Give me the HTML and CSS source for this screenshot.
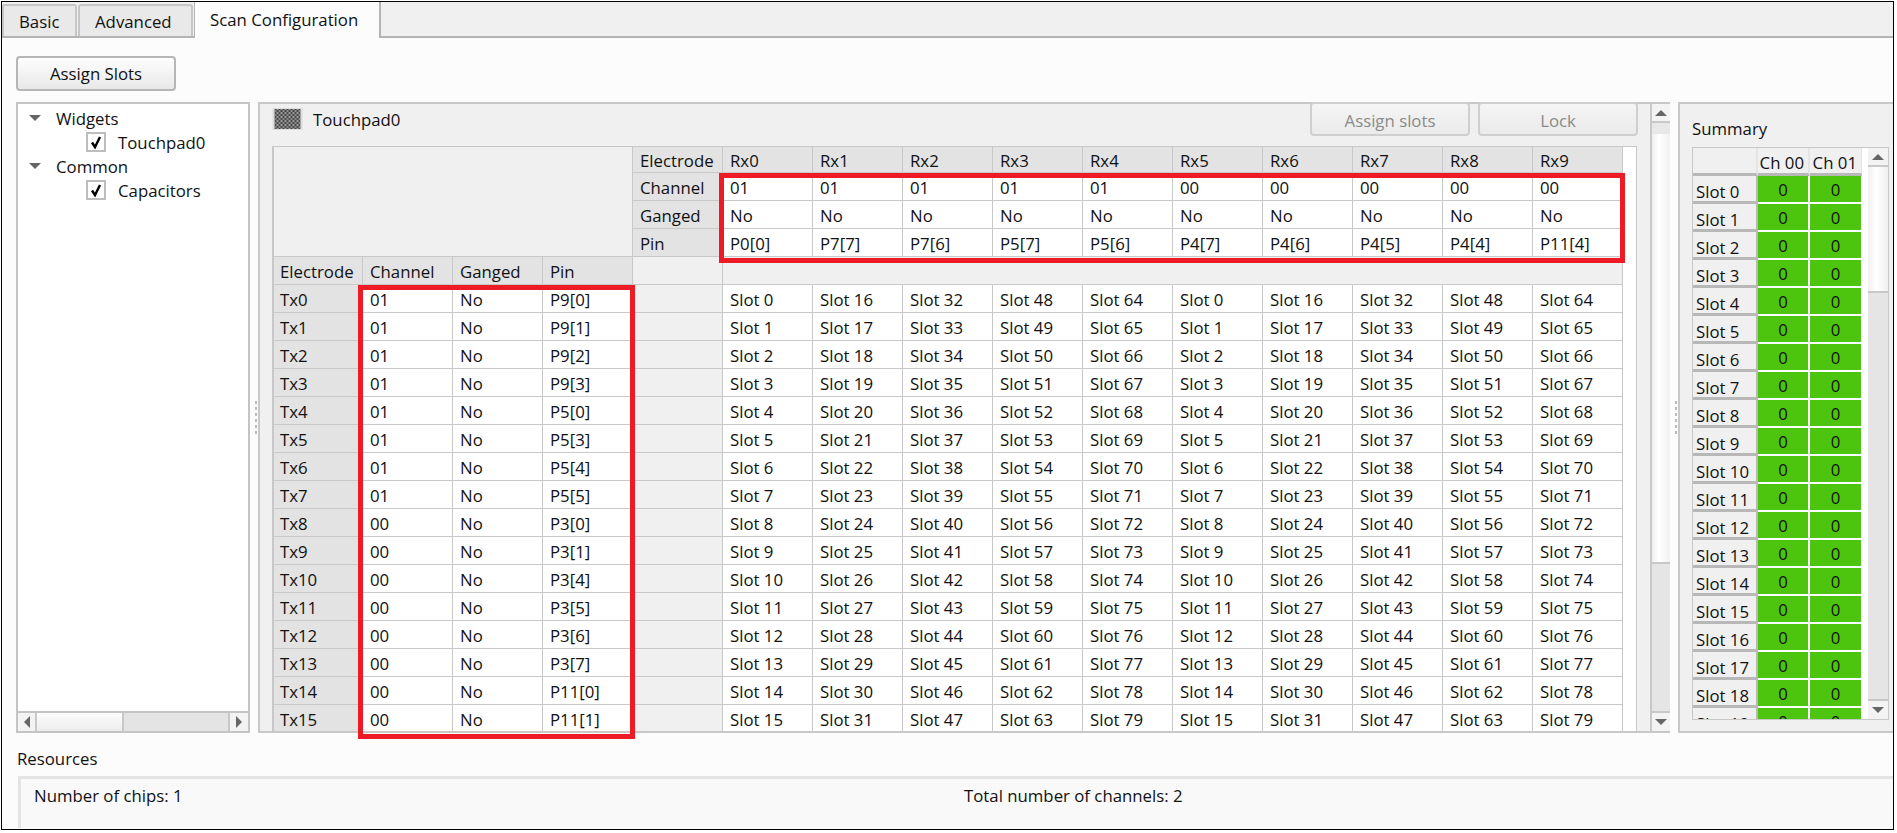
FILE: index.html
```html
<!DOCTYPE html>
<html lang="en">
<head>
<meta charset="utf-8">
<title>Scan Configuration</title>
<link rel="stylesheet" href="styles.css">
</head>
<body>
<div class="app">
  <div class="tabbar">
    <div class="tab tab-basic">Basic</div>
    <div class="tab tab-adv">Advanced</div>
    <div class="tab tab-active">Scan Configuration</div>
  </div>
  <button class="btn btn-assign">Assign Slots</button>
  <div class="workspace">
    <aside class="tree">
      <div class="tree-body">
        <div class="tree-row"><span class="tri-down tree-tri"></span><span class="tree-group">Widgets</span></div>
        <div class="tree-row tree-child"><svg class="check" viewBox="0 0 20 20"><rect x="1" y="1" width="18" height="18" fill="#fff" stroke="#bdbdbd" stroke-width="2"/><path d="M6 10.5l3 4.5 5-10" fill="none" stroke="#000" stroke-width="2.4"/></svg><span>Touchpad0</span></div>
        <div class="tree-row"><span class="tri-down tree-tri"></span><span class="tree-group">Common</span></div>
        <div class="tree-row tree-child"><svg class="check" viewBox="0 0 20 20"><rect x="1" y="1" width="18" height="18" fill="#fff" stroke="#bdbdbd" stroke-width="2"/><path d="M6 10.5l3 4.5 5-10" fill="none" stroke="#000" stroke-width="2.4"/></svg><span>Capacitors</span></div>
      </div>
      <div class="hscroll">
        <div class="hs-btn"><span class="tri-left"></span></div>
        <div class="hs-thumb"></div>
        <div class="hs-track"></div>
        <div class="hs-btn hs-btn-r"><span class="tri-right"></span></div>
      </div>
    </aside>
    <div class="splitter"><i></i><i></i><i></i><i></i><i></i><i></i></div>
    <section class="editor">
      <div class="editor-main">
        <div class="editor-head">
          <svg class="pad-icon" viewBox="0 0 30 22"><defs><pattern id="chk" width="4" height="4" patternUnits="userSpaceOnUse"><rect width="4" height="4" fill="#4a4a4a"/><rect width="2" height="2" fill="#9a9a9a"/><rect x="2" y="2" width="2" height="2" fill="#8a8a8a"/></pattern></defs><rect width="30" height="22" fill="#dcdcdc"/><rect x="2" y="1" width="26" height="20" fill="url(#chk)"/></svg>
          <span class="pad-name">Touchpad0</span>
          <button class="btn btn-off">Assign slots</button>
          <button class="btn btn-off">Lock</button>
        </div>
        <div class="grid-view">
          <table class="grid">
            <colgroup><col class="col-a"><col class="col-b"><col class="col-b"><col class="col-b"><col class="col-b"><col class="col-b"><col class="col-b"><col class="col-b"><col class="col-b"><col class="col-b"><col class="col-b"><col class="col-b"><col class="col-b"><col class="col-b"><col class="col-b"></colgroup>
            <tr class="first"><td class="blank" colspan="4" rowspan="4"></td><th>Electrode</th><th>Rx0</th><th>Rx1</th><th>Rx2</th><th>Rx3</th><th>Rx4</th><th>Rx5</th><th>Rx6</th><th>Rx7</th><th>Rx8</th><th>Rx9</th></tr>
            <tr><th>Channel</th><td>01</td><td>01</td><td>01</td><td>01</td><td>01</td><td>00</td><td>00</td><td>00</td><td>00</td><td>00</td></tr>
            <tr><th>Ganged</th><td>No</td><td>No</td><td>No</td><td>No</td><td>No</td><td>No</td><td>No</td><td>No</td><td>No</td><td>No</td></tr>
            <tr><th>Pin</th><td>P0[0]</td><td>P7[7]</td><td>P7[6]</td><td>P5[7]</td><td>P5[6]</td><td>P4[7]</td><td>P4[6]</td><td>P4[5]</td><td>P4[4]</td><td>P11[4]</td></tr>
            <tr><th>Electrode</th><th>Channel</th><th>Ganged</th><th>Pin</th><td class="blank"></td><td class="blank" colspan="10"></td></tr>
            <tr><th>Tx0</th><td>01</td><td>No</td><td>P9[0]</td><td class="blank"></td><td>Slot 0</td><td>Slot 16</td><td>Slot 32</td><td>Slot 48</td><td>Slot 64</td><td>Slot 0</td><td>Slot 16</td><td>Slot 32</td><td>Slot 48</td><td>Slot 64</td></tr>
            <tr><th>Tx1</th><td>01</td><td>No</td><td>P9[1]</td><td class="blank"></td><td>Slot 1</td><td>Slot 17</td><td>Slot 33</td><td>Slot 49</td><td>Slot 65</td><td>Slot 1</td><td>Slot 17</td><td>Slot 33</td><td>Slot 49</td><td>Slot 65</td></tr>
            <tr><th>Tx2</th><td>01</td><td>No</td><td>P9[2]</td><td class="blank"></td><td>Slot 2</td><td>Slot 18</td><td>Slot 34</td><td>Slot 50</td><td>Slot 66</td><td>Slot 2</td><td>Slot 18</td><td>Slot 34</td><td>Slot 50</td><td>Slot 66</td></tr>
            <tr><th>Tx3</th><td>01</td><td>No</td><td>P9[3]</td><td class="blank"></td><td>Slot 3</td><td>Slot 19</td><td>Slot 35</td><td>Slot 51</td><td>Slot 67</td><td>Slot 3</td><td>Slot 19</td><td>Slot 35</td><td>Slot 51</td><td>Slot 67</td></tr>
            <tr><th>Tx4</th><td>01</td><td>No</td><td>P5[0]</td><td class="blank"></td><td>Slot 4</td><td>Slot 20</td><td>Slot 36</td><td>Slot 52</td><td>Slot 68</td><td>Slot 4</td><td>Slot 20</td><td>Slot 36</td><td>Slot 52</td><td>Slot 68</td></tr>
            <tr><th>Tx5</th><td>01</td><td>No</td><td>P5[3]</td><td class="blank"></td><td>Slot 5</td><td>Slot 21</td><td>Slot 37</td><td>Slot 53</td><td>Slot 69</td><td>Slot 5</td><td>Slot 21</td><td>Slot 37</td><td>Slot 53</td><td>Slot 69</td></tr>
            <tr><th>Tx6</th><td>01</td><td>No</td><td>P5[4]</td><td class="blank"></td><td>Slot 6</td><td>Slot 22</td><td>Slot 38</td><td>Slot 54</td><td>Slot 70</td><td>Slot 6</td><td>Slot 22</td><td>Slot 38</td><td>Slot 54</td><td>Slot 70</td></tr>
            <tr><th>Tx7</th><td>01</td><td>No</td><td>P5[5]</td><td class="blank"></td><td>Slot 7</td><td>Slot 23</td><td>Slot 39</td><td>Slot 55</td><td>Slot 71</td><td>Slot 7</td><td>Slot 23</td><td>Slot 39</td><td>Slot 55</td><td>Slot 71</td></tr>
            <tr><th>Tx8</th><td>00</td><td>No</td><td>P3[0]</td><td class="blank"></td><td>Slot 8</td><td>Slot 24</td><td>Slot 40</td><td>Slot 56</td><td>Slot 72</td><td>Slot 8</td><td>Slot 24</td><td>Slot 40</td><td>Slot 56</td><td>Slot 72</td></tr>
            <tr><th>Tx9</th><td>00</td><td>No</td><td>P3[1]</td><td class="blank"></td><td>Slot 9</td><td>Slot 25</td><td>Slot 41</td><td>Slot 57</td><td>Slot 73</td><td>Slot 9</td><td>Slot 25</td><td>Slot 41</td><td>Slot 57</td><td>Slot 73</td></tr>
            <tr><th>Tx10</th><td>00</td><td>No</td><td>P3[4]</td><td class="blank"></td><td>Slot 10</td><td>Slot 26</td><td>Slot 42</td><td>Slot 58</td><td>Slot 74</td><td>Slot 10</td><td>Slot 26</td><td>Slot 42</td><td>Slot 58</td><td>Slot 74</td></tr>
            <tr><th>Tx11</th><td>00</td><td>No</td><td>P3[5]</td><td class="blank"></td><td>Slot 11</td><td>Slot 27</td><td>Slot 43</td><td>Slot 59</td><td>Slot 75</td><td>Slot 11</td><td>Slot 27</td><td>Slot 43</td><td>Slot 59</td><td>Slot 75</td></tr>
            <tr><th>Tx12</th><td>00</td><td>No</td><td>P3[6]</td><td class="blank"></td><td>Slot 12</td><td>Slot 28</td><td>Slot 44</td><td>Slot 60</td><td>Slot 76</td><td>Slot 12</td><td>Slot 28</td><td>Slot 44</td><td>Slot 60</td><td>Slot 76</td></tr>
            <tr><th>Tx13</th><td>00</td><td>No</td><td>P3[7]</td><td class="blank"></td><td>Slot 13</td><td>Slot 29</td><td>Slot 45</td><td>Slot 61</td><td>Slot 77</td><td>Slot 13</td><td>Slot 29</td><td>Slot 45</td><td>Slot 61</td><td>Slot 77</td></tr>
            <tr><th>Tx14</th><td>00</td><td>No</td><td>P11[0]</td><td class="blank"></td><td>Slot 14</td><td>Slot 30</td><td>Slot 46</td><td>Slot 62</td><td>Slot 78</td><td>Slot 14</td><td>Slot 30</td><td>Slot 46</td><td>Slot 62</td><td>Slot 78</td></tr>
            <tr><th>Tx15</th><td>00</td><td>No</td><td>P11[1]</td><td class="blank"></td><td>Slot 15</td><td>Slot 31</td><td>Slot 47</td><td>Slot 63</td><td>Slot 79</td><td>Slot 15</td><td>Slot 31</td><td>Slot 47</td><td>Slot 63</td><td>Slot 79</td></tr>
          </table>
        </div>
      </div>
      <div class="vscroll">
        <div class="vs-btn"><span class="tri-up"></span></div>
        <div class="vs-gap"></div>
        <div class="vs-thumb vs-thumb-main"></div>
        <div class="vs-track"></div>
        <div class="vs-btn vs-btn-d"><span class="tri-down"></span></div>
      </div>
    </section>
    <div class="splitter"><i></i><i></i><i></i><i></i><i></i><i></i></div>
    <section class="summary">
      <div class="summary-title">Summary</div>
      <div class="summary-view">
        <div class="summary-clip">
          <table class="sum">
            <colgroup><col class="sum-a"><col class="sum-b"><col class="sum-c"></colgroup>
            <tr class="sum-head"><th></th><th>Ch 00</th><th>Ch 01</th></tr>
            <tr><th>Slot 0</th><td>0</td><td>0</td></tr>
            <tr><th>Slot 1</th><td>0</td><td>0</td></tr>
            <tr><th>Slot 2</th><td>0</td><td>0</td></tr>
            <tr><th>Slot 3</th><td>0</td><td>0</td></tr>
            <tr><th>Slot 4</th><td>0</td><td>0</td></tr>
            <tr><th>Slot 5</th><td>0</td><td>0</td></tr>
            <tr><th>Slot 6</th><td>0</td><td>0</td></tr>
            <tr><th>Slot 7</th><td>0</td><td>0</td></tr>
            <tr><th>Slot 8</th><td>0</td><td>0</td></tr>
            <tr><th>Slot 9</th><td>0</td><td>0</td></tr>
            <tr><th>Slot 10</th><td>0</td><td>0</td></tr>
            <tr><th>Slot 11</th><td>0</td><td>0</td></tr>
            <tr><th>Slot 12</th><td>0</td><td>0</td></tr>
            <tr><th>Slot 13</th><td>0</td><td>0</td></tr>
            <tr><th>Slot 14</th><td>0</td><td>0</td></tr>
            <tr><th>Slot 15</th><td>0</td><td>0</td></tr>
            <tr><th>Slot 16</th><td>0</td><td>0</td></tr>
            <tr><th>Slot 17</th><td>0</td><td>0</td></tr>
            <tr><th>Slot 18</th><td>0</td><td>0</td></tr>
            <tr><th>Slot 19</th><td>0</td><td>0</td></tr>
          </table>
        </div>
        <div class="vscroll vscroll-sum">
          <div class="vs-btn"><span class="tri-up"></span></div>
          <div class="vs-thumb vs-thumb-sum"></div>
          <div class="vs-track"></div>
          <div class="vs-btn vs-btn-d"><span class="tri-down"></span></div>
        </div>
      </div>
    </section>
  </div>
  <div class="res-title">Resources</div>
  <div class="res-box">
    <span>Number of chips: 1</span>
    <span>Total number of channels: 2</span>
  </div>
  <div class="mark mark-top"></div>
  <div class="mark mark-left"></div>
</div>
</body>
</html>
```

FILE: styles.css
```css
* { box-sizing: border-box; }
html, body { margin: 0; padding: 0; background: #fff; }
body {
  font-family: "Open Sans", "Noto Sans", sans-serif;
  font-size: 16.8px;
  color: #111;
  overflow: hidden;
}
.app {
  position: relative;
  width: 1893px;
  height: 829px;
  margin: 1px 0 0 1px;
  border: 1px solid #000;
  background: #fcfcfc;
  overflow: hidden;
}
.tabbar {
  display: flex;
  align-items: flex-end;
  height: 36px;
  background: #f0f0f0;
  border-bottom: 2px solid #b4b4b4;
}
.tab {
  display: flex;
  align-items: center;
  height: 32px;
  padding-left: 15px;
  background: #e9e9e9;
  border: 2px solid #c6c6c6;
  border-bottom: 0;
  border-radius: 3px 3px 0 0;
}
.tab-basic { width: 75px; margin-right: 1px; }
.tab-adv { width: 115px; margin-right: 1px; }
.tab-active {
  width: 187px;
  height: 38px;
  margin-bottom: -2px;
  padding: 0 0 0 15px;
  background: #fcfcfc;
  border-color: #b4b4b4;
  border-top: 0;
  border-left-width: 1px;
}
.btn {
  font: inherit;
  color: inherit;
  padding: 0;
  border: 2px solid #b6b6b6;
  border-radius: 4px;
  background: linear-gradient(#fdfdfd, #e9e9e9);
}
.btn-assign {
  display: block;
  width: 160px;
  height: 35px;
  margin: 18px 0 0 14px;
}
.workspace {
  display: flex;
  height: 631px;
  margin: 11px 0 0 14px;
}
.tree {
  display: flex;
  flex-direction: column;
  width: 234px;
  border: 2px solid #c4c4c4;
  background: #fff;
}
.tree-body { flex: 1; padding-top: 2px; }
.tree-row {
  display: flex;
  align-items: center;
  height: 24px;
}
.tree-tri { margin-left: 11px; }
.tree-group { margin-left: 15px; }
.tree-child { padding-left: 68px; }
.check { width: 20px; height: 20px; margin-right: 12px; }
.hscroll {
  display: flex;
  height: 20px;
  border-top: 2px solid #c4c4c4;
  background: #e4e4e4;
}
.hs-btn {
  display: flex;
  align-items: center;
  justify-content: center;
  width: 19px;
  background: #f3f3f3;
  border-right: 2px solid #c8c8c8;
}
.hs-btn-r { width: 20px; border-right: 0; border-left: 2px solid #c8c8c8; }
.hs-thumb {
  width: 87px;
  background: linear-gradient(#fdfdfd, #ececec);
  border-right: 2px solid #c8c8c8;
}
.hs-track { flex: 1; }
.tri-left, .tri-right, .tri-up, .tri-down { display: block; width: 0; height: 0; border-style: solid; border-color: transparent; }
.tri-left { border-width: 6px 6px 6px 0; border-right-color: #666; }
.tri-right { border-width: 6px 0 6px 6px; border-left-color: #666; }
.tri-up { border-width: 0 6px 6px; border-bottom-color: #666; }
.tri-down { border-width: 6px 6px 0; border-top-color: #666; }
.splitter {
  display: flex;
  flex-direction: column;
  align-items: flex-end;
  justify-content: center;
  gap: 3px;
  width: 8px;
  padding: 0 1px 0 0;
}
.splitter i { display: block; width: 2px; height: 3px; background: #bbb; }
.editor {
  display: flex;
  width: 1412px;
  background: #f0f0f0;
  border: 2px solid #c8c8c8;
  border-right: 0;
}
.editor-main { flex: 1; min-width: 0; display: flex; flex-direction: column; }
.editor-head {
  display: flex;
  align-items: flex-start;
  height: 42px;
  padding-left: 12px;
}
.pad-icon { width: 31px; height: 22px; margin: 4px 10px 0 0; }
.pad-name { line-height: 32px; flex: 1; }
.btn-off {
  width: 160px;
  height: 34px;
  margin-top: -2px;
  margin-right: 8px;
  padding-top: 2px;
  color: #8a8a8a;
  border-color: #cfcfcf;
  background: linear-gradient(#f5f5f5, #eaeaea);
}
.btn-off:last-child { margin-right: 12px; }
.grid-view {
  flex: 1;
  min-height: 0;
  margin: 0 13px 0 12px;
  background: #fff;
  border: solid #c8c8c8;
  border-width: 1px 1px 0 2px;
  overflow: hidden;
}
.grid {
  table-layout: fixed;
  width: 1349px;
  border-collapse: separate;
  border-spacing: 0;
}
.col-a { width: 89px; }
.col-b { width: 90px; }
.grid th, .grid td {
  height: 28px;
  padding: 1px 0 0 7px;
  font-weight: 400;
  text-align: left;
  white-space: nowrap;
  border-right: 1px solid #c8c8c8;
  border-bottom: 1px solid #c8c8c8;
  background: #fff;
}
.grid tr:nth-child(n+5) th:first-child { padding-left: 6px; }
.grid tr.first th { height: 26px; }
.grid th { background: #e3e3e3; }
.grid td.blank { background: #f0f0f0; }
.vscroll {
  display: flex;
  flex-direction: column;
  width: 20px;
  background: #f0f0f0;
  border-left: 2px solid #c8c8c8;
}
.vs-btn {
  display: flex;
  align-items: center;
  justify-content: center;
  flex: none;
  height: 19px;
  background: #f3f3f3;
  border-bottom: 2px solid #c8c8c8;
}
.vs-btn-d { height: 20px; border-bottom: 0; border-top: 2px solid #c8c8c8; }
.vs-gap { height: 11px; flex: none; background: #e8e8e8; }
.vs-thumb {
  flex: none;
  background: linear-gradient(90deg, #f0f0f0, #ffffff 40%, #f0f0f0);
  border-bottom: 2px solid #c8c8c8;
}
.vs-thumb-main { height: 430px; }
.vs-thumb-sum { height: 126px; }
.vs-track { flex: 1; background: #e5e5e5; }
.summary {
  flex: 1;
  min-width: 0;
  background: #f0f0f0;
  border: solid #c8c8c8;
  border-width: 2px 0 2px 2px;
  padding: 12px 0 12px 12px;
}
.summary-title { height: 31px; line-height: 26px; }
.summary-view {
  display: flex;
  width: 197px;
  height: 573px;
  background: #fff;
  border: 1px solid #c8c8c8;
}
.summary-clip { flex: 1; min-width: 0; overflow: hidden; }
.sum {
  table-layout: fixed;
  width: 170px;
  border-collapse: separate;
  border-spacing: 0;
}
.sum-a { width: 65px; }
.sum-b { width: 52px; }
.sum-c { width: 53px; }
.sum th, .sum td { height: 28px; padding: 0; font-weight: 400; line-height: 18px; }
.sum th {
  background: #f0f0f0;
  text-align: left;
  padding: 7px 0 0 3px;
  white-space: nowrap;
  border-right: 2px solid #b8b8b8;
  border-bottom: 3px solid #b8b8b8;
}
.sum .sum-head th {
  text-align: right;
  padding: 5px 4px 0 0;
  border-right: 2px solid #e4e4e4;
  border-bottom: 3px solid #b8b8b8;
}
.sum td {
  text-align: center;
  vertical-align: top;
  padding-top: 1px;
  line-height: 25px;
  background: #4dc50f;
  border-right: 2px solid #fff;
  border-bottom: 2px solid #fff;
}
.vscroll-sum { width: 20px; border-left: 0; margin-left: 6px; background: #e5e5e5; }
.res-title { margin: 14px 0 0 15px; line-height: 24px; height: 24px; }
.res-box {
  display: grid;
  grid-template-columns: 930px 1fr;
  height: 52px;
  margin: 5px 0 0 16px;
  padding: 5px 0 0 13px;
  background: #f9f9f9;
  border: solid #e4e4e4;
  border-width: 3px 0 0 3px;
}
.mark {
  position: absolute;
  border: 5px solid #ed1c24;
  pointer-events: none;
}
.mark-top { left: 717px; top: 171px; width: 906px; height: 90px; }
.mark-left { left: 356px; top: 283px; width: 277px; height: 454px; }
```
